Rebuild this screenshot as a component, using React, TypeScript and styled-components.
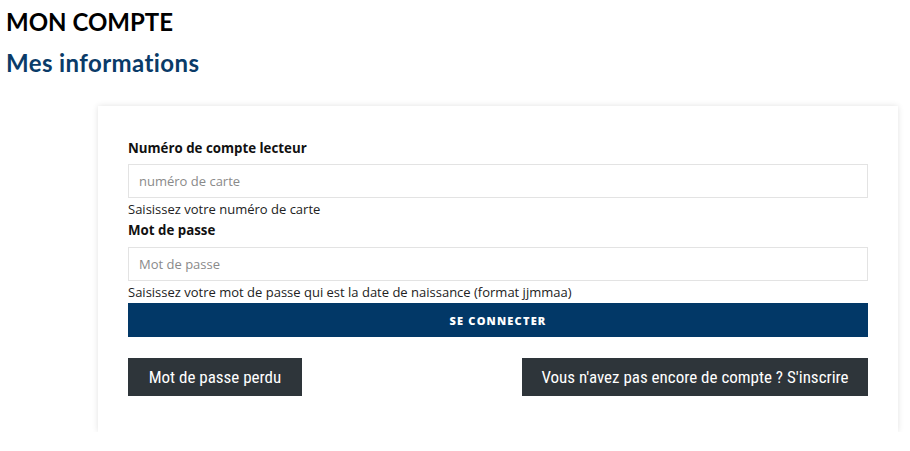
import styled, { createGlobalStyle } from "styled-components";

const GlobalStyle = createGlobalStyle`
  body {
    margin: 0;
    background: #ffffff;
    font-family: "Open Sans", "Noto Sans", sans-serif;
    color: #111;
  }
`

const Page = styled.div`
  padding: 7px 6px 0 6px;
`

const Title = styled.h1`
  margin: 0;
  font-family: "Lato", "Noto Sans", sans-serif;
  font-size: 24px;
  line-height: 30px;
  font-weight: 700;
  color: #000;
`

const Subtitle = styled.h2`
  margin: 11px 0 0 0;
  font-family: "Lato", "Noto Sans", sans-serif;
  font-size: 24px;
  line-height: 30px;
  font-weight: 700;
  letter-spacing: 0.4px;
  font-variant-ligatures: none;
  color: #0a3b68;
`

const Card = styled.section`
  margin: 28px 0 0 92px;
  width: 800px;
  box-sizing: border-box;
  padding: 32px 30px 36px 30px;
  background: #fff;
  box-shadow: 0 0 6px rgba(0, 0, 0, 0.12);
`

const Label = styled.label<{ $after?: number }>`
  display: block;
  font-size: 13.3px;
  line-height: 20px;
  font-weight: 700;
  color: #111;
  margin-bottom: ${p => p.$after ?? 6}px;
`

const Input = styled.input`
  display: block;
  width: 100%;
  box-sizing: border-box;
  height: 34px;
  padding: 0 10px;
  border: 1px solid #e3e3e3;
  font-family: inherit;
  font-size: 13px;
  color: #333;
  outline: none;
  &::placeholder {
    color: #8a8a8a;
  }
`

const Help = styled.div`
  font-size: 13px;
  line-height: 22px;
  color: #222;
`

const SubmitButton = styled.button`
  display: block;
  width: 100%;
  height: 34px;
  border: none;
  background: #023867;
  color: #fff;
  font-family: "Open Sans", sans-serif;
  font-size: 11px;
  font-weight: 800;
  letter-spacing: 1.2px;
  text-transform: uppercase;
  cursor: pointer;
`

const Actions = styled.div`
  display: flex;
  justify-content: space-between;
  margin-top: 21px;
`

const DarkButton = styled.button<{ $width: number }>`
  width: ${p => p.$width}px;
  height: 38px;
  padding: 0;
  border: none;
  background: #2e353a;
  color: #fff;
  font-family: "Roboto", sans-serif;
  font-stretch: condensed;
  font-size: 17px;
  white-space: nowrap;
  cursor: pointer;
`

function App() {
  return (
    <Page>
      <GlobalStyle />
      <Title>MON COMPTE</Title>
      <Subtitle>Mes informations</Subtitle>
      <Card>
        <div>
          <Label htmlFor="card">Numéro de compte lecteur</Label>
          <Input id="card" placeholder="numéro de carte" autoFocus />
          <Help>Saisissez votre numéro de carte</Help>
        </div>
        <div>
          <Label htmlFor="pass" $after={7}>Mot de passe</Label>
          <Input id="pass" type="password" placeholder="Mot de passe" />
          <Help>Saisissez votre mot de passe qui est la date de naissance (format jjmmaa)</Help>
        </div>
        <SubmitButton>Se connecter</SubmitButton>
        <Actions>
          <DarkButton $width={174}>Mot de passe perdu</DarkButton>
          <DarkButton $width={346}>Vous n'avez pas encore de compte ? S'inscrire</DarkButton>
        </Actions>
      </Card>
    </Page>
  )
}

export default App
